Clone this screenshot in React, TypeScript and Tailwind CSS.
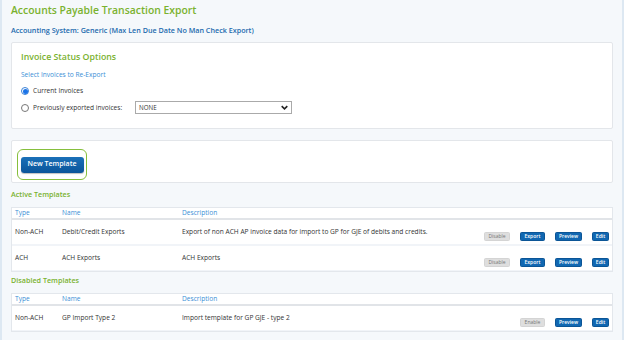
import React from "react";

interface TemplateRow {
  type: string;
  name: string;
  description: string;
  enabled: boolean;
}

const activeTemplates: TemplateRow[] = [
  {
    type: "Non-ACH",
    name: "Debit/Credit Exports",
    description: "Export of non ACH AP invoice data for import to GP for GJE of debits and credits.",
    enabled: true,
  },
  { type: "ACH", name: "ACH Exports", description: "ACH Exports", enabled: true },
];

const disabledTemplates: TemplateRow[] = [
  { type: "Non-ACH", name: "GP Import Type 2", description: "Import template for GP GJE - type 2", enabled: false },
];

function SmallButton({ label, muted }: { label: string; muted?: boolean }) {
  return (
    <span
      className={
        muted
          ? "flex h-[9px] items-center justify-center rounded-[1.5px] border border-[#d4d4d4] bg-[#dedede] text-[5px] text-[#777]"
          : "flex h-[9px] items-center justify-center rounded-[1.5px] border border-[#0b5596] bg-[#1167b1] text-[5px] font-semibold text-white"
      }
    >
      {label}
    </span>
  );
}

function TemplateTable({ rows }: { rows: TemplateRow[] }) {
  return (
    <div className="border border-[#e3e7ec] bg-[#f1f4f8] pb-[1px]">
      <div className="flex h-[12px] items-center border-b-2 border-[#e1e4e8] bg-white text-[6.6px] text-[#3b8fd6]">
        <span className="w-[50px] pl-[3px]">Type</span>
        <span className="w-[120px]">Name</span>
        <span>Description</span>
      </div>
      {rows.map((row, i) => (
        <div
          key={row.name}
          className={`flex h-[24px] bg-white text-[6.6px] text-[#333] ${i > 0 ? "mt-[2px]" : ""}`}
        >
          <span className="w-[50px] pl-[3px] pt-[7px]">{row.type}</span>
          <span className="w-[120px] pt-[7px]">{row.name}</span>
          <span className="flex-1 pt-[7px]">{row.description}</span>
          <div className="flex items-start pr-[3px] pt-[12px]">
            {row.enabled ? (
              <>
                <span className="w-[26px]">
                  <SmallButton label="Disable" muted />
                </span>
                <span className="ml-[10px] w-[25px]">
                  <SmallButton label="Export" />
                </span>
              </>
            ) : (
              <span className="w-[25px]">
                <SmallButton label="Enable" muted />
              </span>
            )}
            <span className="ml-[10px] w-[27px]">
              <SmallButton label="Preview" />
            </span>
            <span className="ml-[10px] w-[17px]">
              <SmallButton label="Edit" />
            </span>
          </div>
        </div>
      ))}
    </div>
  );
}

export default function App() {
  return (
    <div
      className="h-[340px] w-[624px] overflow-hidden border-x-2 border-[#dde8f2] bg-[#f5f8fb] px-[9px]"
      style={{ fontFamily: '"Open Sans", "Liberation Sans", sans-serif' }}
    >
      <h1 className="pt-[1px] text-[10.4px] font-semibold leading-[18px] text-[#7ab22f]">
        Accounts Payable Transaction Export
      </h1>
      <p className="mt-[6px] text-[7.2px] font-semibold leading-[10px] text-[#1c6aae]">
        Accounting System: Generic (Max Len Due Date No Man Check Export)
      </p>

      <section className="mt-[7px] h-[87px] rounded-[2px] border border-[#e3e6ea] bg-white px-[9px] pt-[7px]">
        <h2 className="text-[8.8px] font-semibold leading-[14px] text-[#7ab22f]">Invoice Status Options</h2>
        <p className="mt-[6px] text-[6.6px] leading-[10px] text-[#3b8fd6]">Select Invoices to Re-Export</p>
        <div className="mt-[5px] flex h-[12px] items-center gap-[4px] text-[6.6px] text-[#333]">
          <span className="flex h-[8px] w-[8px] items-center justify-center rounded-full border border-[#3b82d6] bg-white">
            <span className="h-[5px] w-[5px] rounded-full bg-[#1a73e8]" />
          </span>
          <span>Current Invoices</span>
        </div>
        <div className="mt-[4px] flex h-[13px] items-center text-[6.6px] text-[#333]">
          <span className="h-[8px] w-[8px] rounded-full border border-[#777] bg-white" />
          <span className="ml-[4px] w-[102px]">Previously exported invoices:</span>
          <span className="flex h-[13px] w-[157px] items-center justify-between border border-[#aaa] bg-white px-[3px] text-[6.2px]">
            <span>NONE</span>
            <svg width="7" height="5" viewBox="0 0 10 7" fill="none" stroke="#222" strokeWidth="2.2">
              <path d="M1 1.5l4 4 4-4" />
            </svg>
          </span>
        </div>
      </section>

      <section className="mt-[11px] h-[43px] rounded-[2px] border border-[#e3e6ea] bg-white pl-[5px] pt-[8px]">
        <span className="flex h-[31px] w-[70px] items-center justify-center rounded-[6px] border-[1.5px] border-[#86bf3c]">
          <span className="flex h-[16px] w-[63px] items-center justify-center rounded-[3px] bg-gradient-to-b from-[#1a70b8] to-[#0b559a] text-[7px] font-semibold text-white shadow-[0_1px_1px_rgba(0,0,0,0.25)]">
            New Template
          </span>
        </span>
      </section>

      <h3 className="mt-[5px] text-[7.2px] font-semibold leading-[12px] text-[#7ab22f]">Active Templates</h3>
      <div className="mt-[7px]">
        <TemplateTable rows={activeTemplates} />
      </div>

      <h3 className="mt-[2px] text-[7.2px] font-semibold leading-[12px] text-[#7ab22f]">Disabled Templates</h3>
      <div className="mt-[7px]">
        <TemplateTable rows={disabledTemplates} />
      </div>
    </div>
  );
}
